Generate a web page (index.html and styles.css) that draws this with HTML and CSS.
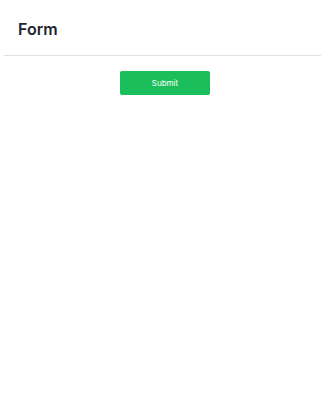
FILE: index.html
```html
<!DOCTYPE html>
<html>
<head>
<meta charset="utf-8">
<link rel="stylesheet" href="styles.css">
</head>
<body>
<div class="page">
  <header class="header"><h1 class="title">Form</h1></header>
  <form class="form">
    <button type="button" class="submit">Submit</button>
  </form>
</div>
</body>
</html>
```
FILE: styles.css
```css
html, body { margin: 0; padding: 0; background: #ffffff; }
body { font-family: Inter, "Noto Sans", "Liberation Sans", sans-serif; }
.page { margin: 0 4px; }
.header {
  height: 56px;
  box-sizing: border-box;
  padding: 0 14px;
  display: flex;
  align-items: center;
  border-bottom: 1px solid #dde1e6;
}
.title {
  margin: 3px 0 0 0;
  font-size: 16px;
  font-weight: 600;
  color: #1f2433;
  line-height: 22px;
}
.form {
  display: flex;
  justify-content: center;
  padding: 15px 0 0 5px;
}
.submit {
  width: 90px;
  height: 24px;
  border: none;
  border-radius: 2px;
  background: #1abf5c;
  color: #ffffff;
  font-family: Inter, "Noto Sans", sans-serif;
  font-size: 8px;
  font-weight: 400;
  padding: 0;
}
```
